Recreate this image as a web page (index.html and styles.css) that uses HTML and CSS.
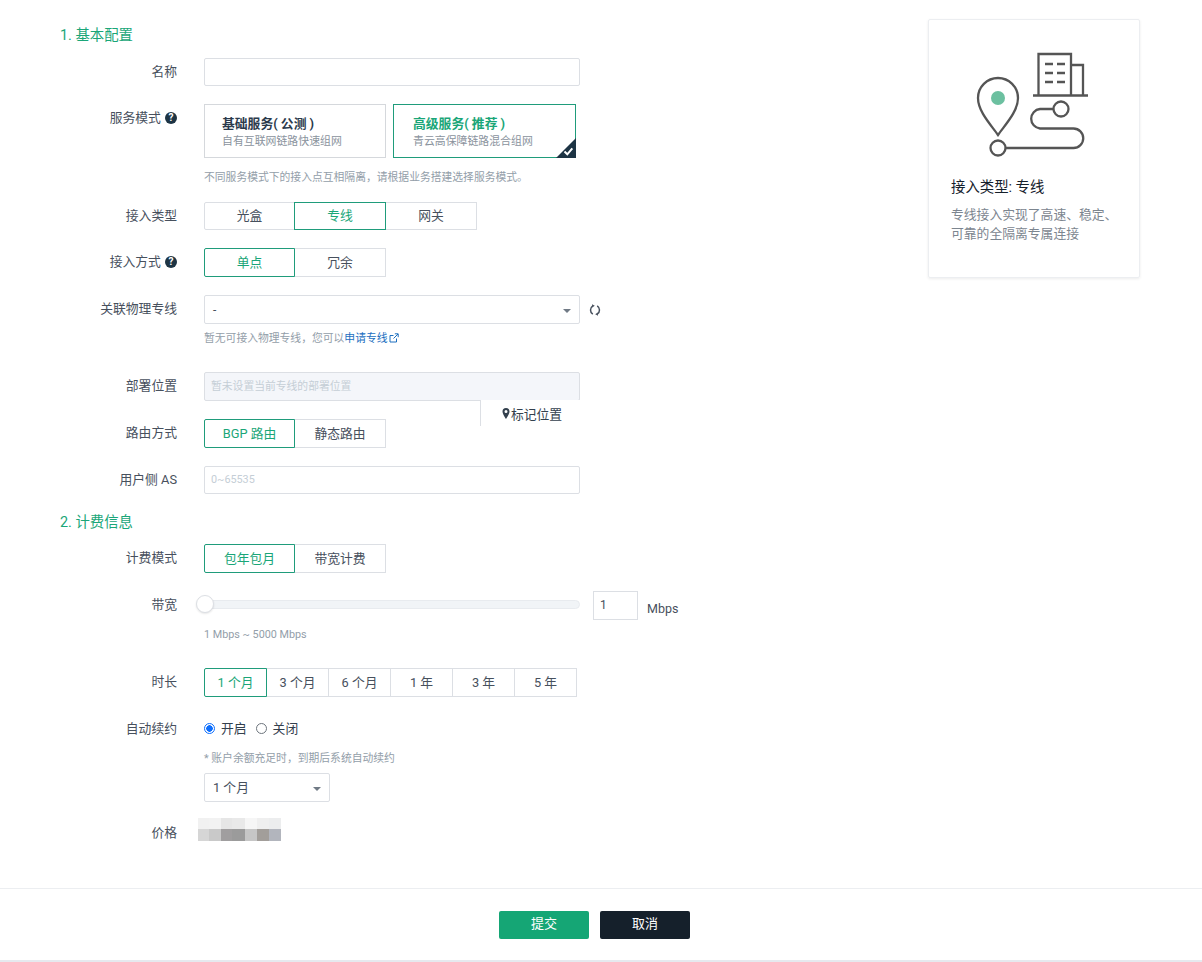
FILE: index.html
```html
<!DOCTYPE html>
<html lang="zh-CN">
<head>
<meta charset="utf-8">
<title>专线</title>
<link rel="stylesheet" href="styles.css">
</head>
<body>
<div class="main">
  <form class="form">
    <h2 class="heading">1. 基本配置</h2>
    <div class="row">
      <div class="label">名称</div>
      <div class="input short"></div>
    </div>
    <div class="row">
      <div class="label">服务模式 <span class="help">?</span></div>
      <div class="field">
        <div class="plans">
          <div class="plan">
            <div class="plan-title">基础服务( 公测 )</div>
            <div class="plan-sub">自有互联网链路快速组网</div>
          </div>
          <div class="plan plan-on">
            <div class="plan-title">高级服务( 推荐 )</div>
            <div class="plan-sub">青云高保障链路混合组网</div>
            <svg class="corner" viewBox="0 0 20 20" width="20" height="20"><path d="M20 0V20H0Z" fill="#1d3444"/><path d="M8.500 13.500l2.800 2.800 5-6" fill="none" stroke="#fff" stroke-width="2"/></svg>
          </div>
        </div>
        <p class="hint hint-plan">不同服务模式下的接入点互相隔离，请根据业务搭建选择服务模式。</p>
      </div>
    </div>
    <div class="row">
      <div class="label">接入类型</div>
      <div class="seg seg-short seg-wide">
        <span class="seg-item">光盒</span><span class="seg-item seg-on">专线</span><span class="seg-item">网关</span>
      </div>
    </div>
    <div class="row">
      <div class="label">接入方式 <span class="help">?</span></div>
      <div class="seg seg-wide">
        <span class="seg-item seg-on">单点</span><span class="seg-item">冗余</span>
      </div>
    </div>
    <div class="row row-loose">
      <div class="label">关联物理专线</div>
      <div class="field">
        <div class="select-line">
          <div class="select select-full"><span class="dash">-</span><i class="caret"></i></div>
          <svg class="refresh" viewBox="0 0 12 12" width="12" height="12"><path d="M3.800 1.800A5 5 0 0 0 3.800 10.200M8.200 10.200A5 5 0 0 0 8.200 1.800" fill="none" stroke="#47505d" stroke-width="1.500"/><path d="M3 .2L5.800 1.700 3.200 3.400zM9 11.800L6.200 10.300 8.800 8.600z" fill="#47505d"/></svg>
        </div>
        <p class="hint hint-tight">暂无可接入物理专线，您可以<a class="link">申请专线</a><svg class="ext" viewBox="0 0 10 10" width="10" height="10"><path d="M7.500 5.500V9H1V2.500h3.500M5.800 .8H9.200V4.200M9 1L4.500 5.500" fill="none" stroke="#1c6fbf" stroke-width="1"/></svg></p>
      </div>
    </div>
    <div class="row">
      <div class="label">部署位置</div>
      <div class="location">
        <div class="input input-tall input-off">暂未设置当前专线的部署位置</div>
        <div class="mark">
          <svg viewBox="0 0 8 11" width="8" height="11"><path d="M4 0a3.500 3.500 0 0 0-3.500 3.500C.5 6 4 11 4 11s3.500-5 3.500-7.500A3.500 3.500 0 0 0 4 0zm0 5a1.500 1.500 0 1 1 0-3 1.500 1.500 0 0 1 0 3z" fill="#33404d"/></svg>标记位置
        </div>
      </div>
    </div>
    <div class="row">
      <div class="label">路由方式</div>
      <div class="seg seg-wide">
        <span class="seg-item seg-on">BGP 路由</span><span class="seg-item">静态路由</span>
      </div>
    </div>
    <div class="row row-end">
      <div class="label">用户侧 AS</div>
      <div class="input short input-ph">0~65535</div>
    </div>
    <h2 class="heading heading-second">2. 计费信息</h2>
    <div class="row">
      <div class="label">计费模式</div>
      <div class="seg seg-wide">
        <span class="seg-item seg-on">包年包月</span><span class="seg-item">带宽计费</span>
      </div>
    </div>
    <div class="row row-loose">
      <div class="label">带宽</div>
      <div class="field">
        <div class="slider-line">
          <div class="track"><i class="thumb"></i></div>
          <div class="num">1</div>
          <span class="unit">Mbps</span>
        </div>
        <p class="hint hint-tight">1 Mbps ~ 5000 Mbps</p>
      </div>
    </div>
    <div class="row">
      <div class="label">时长</div>
      <div class="seg seg-narrow">
        <span class="seg-item seg-on">1 个月</span><span class="seg-item">3 个月</span><span class="seg-item">6 个月</span><span class="seg-item">1 年</span><span class="seg-item">3 年</span><span class="seg-item">5 年</span>
      </div>
    </div>
    <div class="row row-renew">
      <div class="label">自动续约</div>
      <div class="field">
        <div class="radios">
          <span class="radio radio-on"></span><span class="radio-text">开启</span>
          <span class="radio"></span><span class="radio-text">关闭</span>
        </div>
        <p class="hint hint-renew">* 账户余额充足时，到期后系统自动续约</p>
        <div class="select select-small">1 个月<i class="caret"></i></div>
      </div>
    </div>
    <div class="row row-price">
      <div class="label">价格</div>
      <div class="mosaic">
        <i class="m m1"></i><i class="m m2"></i><i class="m m3"></i><i class="m m4"></i><i class="m m5"></i><i class="m m6"></i><i class="m m7"></i>
        <i class="m m8"></i><i class="m m9"></i><i class="m m10"></i><i class="m m11"></i><i class="m m12"></i><i class="m m13"></i><i class="m m14"></i>
      </div>
    </div>
  </form>
  <aside class="card">
    <svg class="art" viewBox="0 0 140 125" width="140" height="125">
      <g fill="none" stroke="#555" stroke-width="2.300">
        <path d="M38 95C32 86 18 72 18 58a20 20 0 0 1 40 0C58 72 44 86 38 95z"/>
        <circle cx="38" cy="108" r="7.500"/>
        <path d="M45.500 108H113.500a9.700 9.700 0 0 0 0-19.500H80a9.800 9.800 0 0 1 0-19.500H94"/>
        <circle cx="101" cy="69" r="7.500"/>
        <path d="M78.500 55V14H111V55M111 25H123V55M73 55.500H128"/>
        <path d="M85 24h8M97 24h8M85 33h8M97 33h8M85 42h8M97 42h8"/>
      </g>
      <circle cx="38" cy="58" r="7" fill="#6cc0a0"/>
    </svg>
    <h3 class="card-title">接入类型: 专线</h3>
    <p class="card-text">专线接入实现了高速、稳定、可靠的全隔离专属连接</p>
  </aside>
</div>
<footer class="footer">
  <button class="btn btn-primary" type="button">提交</button>
  <button class="btn btn-dark" type="button">取消</button>
</footer>
</body>
</html>
```
FILE: styles.css
```css
* { box-sizing: border-box; }
html, body { margin: 0; padding: 0; }
body {
  width: 1202px;
  height: 962px;
  overflow: hidden;
  background: #fff;
  color: #47505d;
  font-family: Roboto, "Noto Sans CJK SC", "Liberation Sans", sans-serif;
  font-size: 12.8px;
}
.main { display: flex; align-items: flex-start; }
.form { flex: 1; padding-top: 26px; }
.heading {
  margin: 0 0 14px;
  padding: 1px 0 0 60px;
  height: 18px;
  color: #1aa678;
  font-size: 14.400px;
  font-weight: 400;
  line-height: 18px;
}
.heading-second { margin-bottom: 13px; }
.row { display: flex; margin-bottom: 18px; }
.row-loose { margin-bottom: 27px; }
.row-end { margin-bottom: 19px; }
.row-renew { margin-bottom: 17px; }
.row-price { margin-bottom: 41px; }
.label {
  flex: none;
  width: 177px;
  margin-right: 27px;
  line-height: 28px;
  text-align: right;
  white-space: nowrap;
}
.field { display: flex; flex-direction: column; align-items: flex-start; }
.help {
  display: inline-block;
  width: 12px;
  height: 12px;
  margin-left: 1px;
  border-radius: 50%;
  background: #1d3444;
  color: #fff;
  font-size: 10px;
  font-weight: 700;
  line-height: 12px;
  text-align: center;
  vertical-align: 1px;
}
.input {
  height: 28px;
  padding: 0 6px;
  border: 1px solid #dcdfe4;
  border-radius: 2px;
  background: #fff;
  font-size: 10.8px;
  line-height: 26px;
}
.short { width: 376px; }
.input-ph { color: #c5ced6; }
.input-tall { height: 29px; line-height: 27px; }
.input-off { width: 376px; background: #f4f6fa; color: #c5ced6; }
.plans { display: flex; gap: 7px; }
.plan {
  position: relative;
  width: 182px;
  height: 54px;
  padding: 10px 17px 0;
  border: 1px solid #d5d8dc;
}
.plan-on { width: 183px; padding-left: 19px; border-color: #1f9c7b; color: #1aa678; }
.plan-title {
  color: #2b3a4c;
  font-size: 12.8px;
  font-weight: 700;
  line-height: 18px;
}
.plan-on .plan-title { color: #1aa678; }
.plan-sub { color: #8a939d; font-size: 10.9px; line-height: 18px; }
.corner { position: absolute; right: -1px; bottom: -1px; }
.hint { margin: 0; color: #939ea9; font-size: 10.8px; line-height: 14px; white-space: nowrap; }
.hint-plan { margin: 13px 0 -1px; }
.hint-tight { margin: 8px 0 -1px; }
.hint-renew { margin: 11px 0 7px; }
.link { color: #1c6fbf; }
.ext { margin-left: 1px; vertical-align: -1px; }
.seg { display: flex; }
.seg-item {
  position: relative;
  flex: none;
  width: 92px;
  height: 29px;
  margin-right: -1px;
  border: 1px solid #dcdfe4;
  line-height: 27px;
  text-align: center;
}
.seg-item:first-child { border-radius: 2px 0 0 2px; }
.seg-wide .seg-item:first-child { width: 91px; }
.seg-short .seg-item { height: 28px; line-height: 26px; }
.seg-narrow .seg-item { width: 63px; }
.seg-on { z-index: 1; border-color: #1f9c7b; color: #1aa678; }
.select-line { display: flex; align-items: center; }
.select {
  position: relative;
  height: 29px;
  padding-left: 8px;
  border: 1px solid #dcdfe4;
  border-radius: 2px;
  line-height: 27px;
}
.select-full { width: 376px; }
.select-small { width: 126px; }
.dash { font-size: 12px; }
.caret {
  position: absolute;
  top: 13px;
  right: 8px;
  border-top: 4px solid #707a85;
  border-left: 4px solid transparent;
  border-right: 4px solid transparent;
}
.refresh { margin-left: 9px; }
.location { position: relative; }
.mark {
  position: absolute;
  top: 28px;
  right: 0;
  z-index: 2;
  display: flex;
  align-items: center;
  justify-content: center;
  gap: 1px;
  width: 100px;
  height: 26px;
  padding-left: 3px;
  border-left: 1px solid #dcdfe4;
  background: #fff;
  color: #33404d;
}
.slider-line { display: flex; align-items: flex-start; }
.track {
  position: relative;
  width: 376px;
  height: 9px;
  margin-top: 9px;
  border: 1px solid #e8ebef;
  border-radius: 5px;
  background: #f1f4f7;
}
.thumb {
  position: absolute;
  top: -6px;
  left: -9px;
  width: 18px;
  height: 18px;
  border: 1px solid #dcdfe4;
  border-radius: 50%;
  background: #fff;
  box-shadow: 0 1px 2px rgba(0, 0, 0, .1);
}
.num {
  width: 45px;
  height: 29px;
  margin-left: 13px;
  padding-left: 6px;
  border: 1px solid #dcdfe4;
  line-height: 27px;
  font-size: 12px;
}
.unit { margin: 9px 0 0 9px; line-height: 18px; font-size: 12.500px; }
.radios { display: flex; align-items: center; height: 26px; }
.radio {
  flex: none;
  width: 11px;
  height: 11px;
  margin-right: 6px;
  border: 1px solid #6d757d;
  border-radius: 50%;
  background: #fff;
}
.radio-on { border: 1.500px solid #0d6efd; background: radial-gradient(circle, #0d6efd 0 3px, #fff 3.500px); }
.radio-text { margin-right: 9px; padding-bottom: 2px; color: #33404d; }
.mosaic {
  display: grid;
  grid-template-columns: 11px 12px 11px 13px 12px 12px 12px;
  grid-template-rows: 11px 12px;
  margin: -1px 0 0 -6px;
}
.m { display: block; }
.m1 { background: #f1f1f1; }
.m2 { background: #f2f2f2; }
.m3 { background: #e6e6e6; }
.m4 { background: #e9e9e9; }
.m5 { background: #f6f6f6; }
.m6 { background: #efefef; }
.m7 { background: #ecedee; }
.m8 { background: #d6d6d6; }
.m9 { background: #c9c9c9; }
.m10 { background: #a09e9f; }
.m11 { background: #9b9b9b; }
.m12 { background: #c6c6c6; }
.m13 { background: #a29e9a; }
.m14 { background: #b2b5bd; }
.card {
  flex: none;
  width: 212px;
  height: 259px;
  margin: 19px 62px 0 0;
  padding: 20px 22px 0;
  border: 1px solid #eceef1;
  border-radius: 2px;
  box-shadow: 0 1px 3px rgba(0, 0, 0, .08);
}
.art { display: block; margin-left: 9px; }
.card-title {
  margin: 14px 0 8px;
  color: #15202b;
  font-size: 14.400px;
  font-weight: 400;
  line-height: 18px;
}
.card-text {
  margin: 0;
  width: 170px;
  color: #7c858f;
  font-size: 12.8px;
  line-height: 19px;
}
.footer {
  display: flex;
  justify-content: center;
  gap: 11px;
  height: 74px;
  padding: 22px 13px 0 0;
  border-top: 1px solid #eceef1;
  border-bottom: 2px solid #e6e9ef;
}
.btn {
  width: 90px;
  height: 28px;
  border: 0;
  border-radius: 2px;
  color: #fff;
  font-family: inherit;
  font-size: 13px;
  line-height: 26px;
  padding: 0 0 2px;
}
.btn-primary { background: #15a675; }
.btn-dark { background: #15202b; }
```
